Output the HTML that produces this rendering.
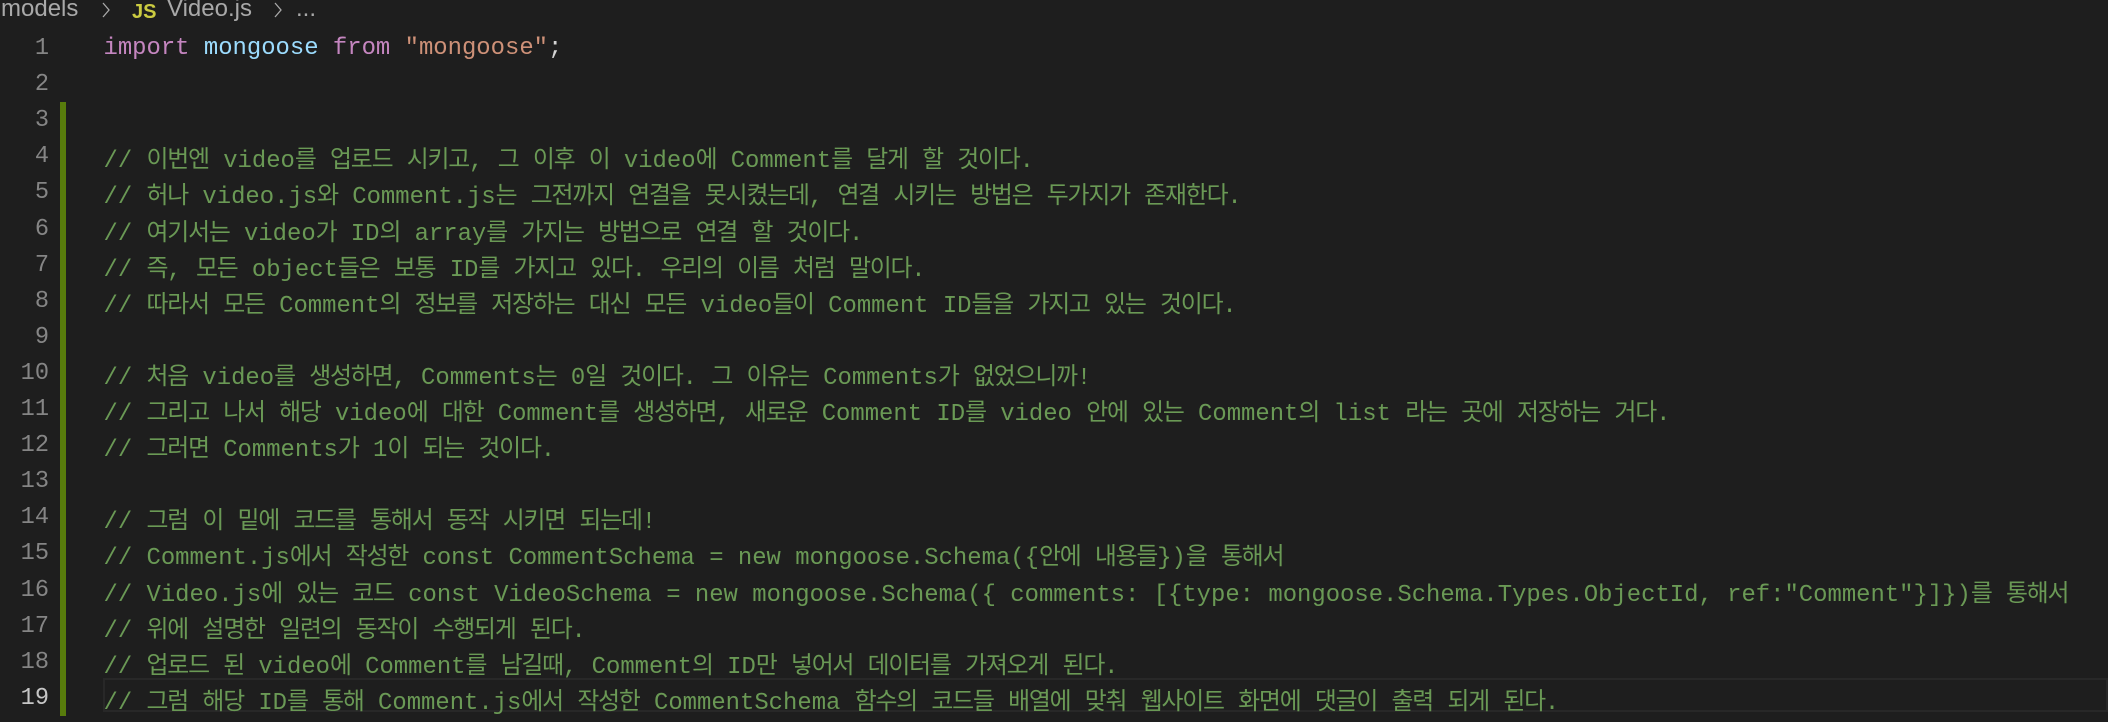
<!DOCTYPE html>
<html><head><meta charset="utf-8"><style>
html,body{margin:0;padding:0;background:#1e1e1e;width:2108px;height:716px;overflow:hidden;}
.bc{position:absolute;top:-4px;font-family:"Liberation Sans",sans-serif;font-size:24px;color:#a9a9a9;line-height:26px;white-space:nowrap}
.chev{position:absolute;top:0px}
.ln{position:absolute;left:0;width:49px;text-align:right;font-family:"Liberation Mono",monospace;font-size:23.6px;color:#858585;height:36px;line-height:36px}
.code{position:absolute;left:103.5px;font-family:"Liberation Mono","Noto Sans CJK KR",monospace;font-size:23.9px;color:#6a9955;height:36px;line-height:36px;white-space:pre}
.k{letter-spacing:-1.2px;font-family:"Noto Sans CJK KR",sans-serif}
.gut{position:absolute;left:60px;width:6px;top:102px;height:614px;background:#587c0c}
.cur{position:absolute;left:103px;right:0;top:678px;height:34px;border:2px solid #282828;box-sizing:border-box}
</style></head><body>
<div class="bc" style="left:1px">models</div>
<svg class="chev" style="left:99px" width="14" height="20" viewBox="0 0 14 20"><path d="M4 3 L10 10 L4 17" stroke="#a9a9a9" stroke-width="1.3" fill="none"/></svg>
<div class="bc" style="left:132px;color:#cbcb41;font-weight:bold;font-size:20px;top:-1px">JS</div>
<div class="bc" style="left:167px">Video.js</div>
<svg class="chev" style="left:271px" width="14" height="20" viewBox="0 0 14 20"><path d="M4 3 L10 10 L4 17" stroke="#a9a9a9" stroke-width="1.3" fill="none"/></svg>
<div class="bc" style="left:296px">...</div>
<div class="gut"></div>
<div class="cur"></div>
<div id="lines"></div>
<script>
var LINES=['<span style="color:#c586c0">import</span> <span style="color:#9cdcfe">mongoose</span> <span style="color:#c586c0">from</span> <span style="color:#ce9178">"mongoose"</span><span style="color:#d4d4d4">;</span>',
'','',
'// 이번엔 video를 업로드 시키고, 그 이후 이 video에 Comment를 달게 할 것이다.',
'// 허나 video.js와 Comment.js는 그전까지 연결을 못시켰는데, 연결 시키는 방법은 두가지가 존재한다.',
'// 여기서는 video가 ID의 array를 가지는 방법으로 연결 할 것이다.',
'// 즉, 모든 object들은 보통 ID를 가지고 있다. 우리의 이름 처럼 말이다.',
'// 따라서 모든 Comment의 정보를 저장하는 대신 모든 video들이 Comment ID들을 가지고 있는 것이다.',
'',
'// 처음 video를 생성하면, Comments는 0일 것이다. 그 이유는 Comments가 없었으니까!',
'// 그리고 나서 해당 video에 대한 Comment를 생성하면, 새로운 Comment ID를 video 안에 있는 Comment의 list 라는 곳에 저장하는 거다.',
'// 그러면 Comments가 1이 되는 것이다.',
'',
'// 그럼 이 밑에 코드를 통해서 동작 시키면 되는데!',
'// Comment.js에서 작성한 const CommentSchema = new mongoose.Schema({안에 내용들})을 통해서',
'// Video.js에 있는 코드 const VideoSchema = new mongoose.Schema({ comments: [{type: mongoose.Schema.Types.ObjectId, ref:"Comment"}]})를 통해서',
'// 위에 설명한 일련의 동작이 수행되게 된다.',
'// 업로드 된 video에 Comment를 남길때, Comment의 ID만 넣어서 데이터를 가져오게 된다.',
'// 그럼 해당 ID를 통해 Comment.js에서 작성한 CommentSchema 함수의 코드들 배열에 맞춰 웹사이트 화면에 댓글이 출력 되게 된다.'];
var html='';
for(var i=0;i<LINES.length;i++){
 var yy=31+i*36.1;
 var t=i==0?LINES[i]:LINES[i].replace(/[\uAC00-\uD7A3]+/g,function(m){return '<span class="k">'+m+'</span>';});
 html+='<div class="ln" style="top:'+yy+'px;'+(i==18?'color:#c6c6c6':'')+'">'+(i+1)+'</div>';
 html+='<div class="code" style="top:'+yy+'px">'+t+'</div>';
}
document.getElementById('lines').innerHTML=html;
</script>
</body></html>
